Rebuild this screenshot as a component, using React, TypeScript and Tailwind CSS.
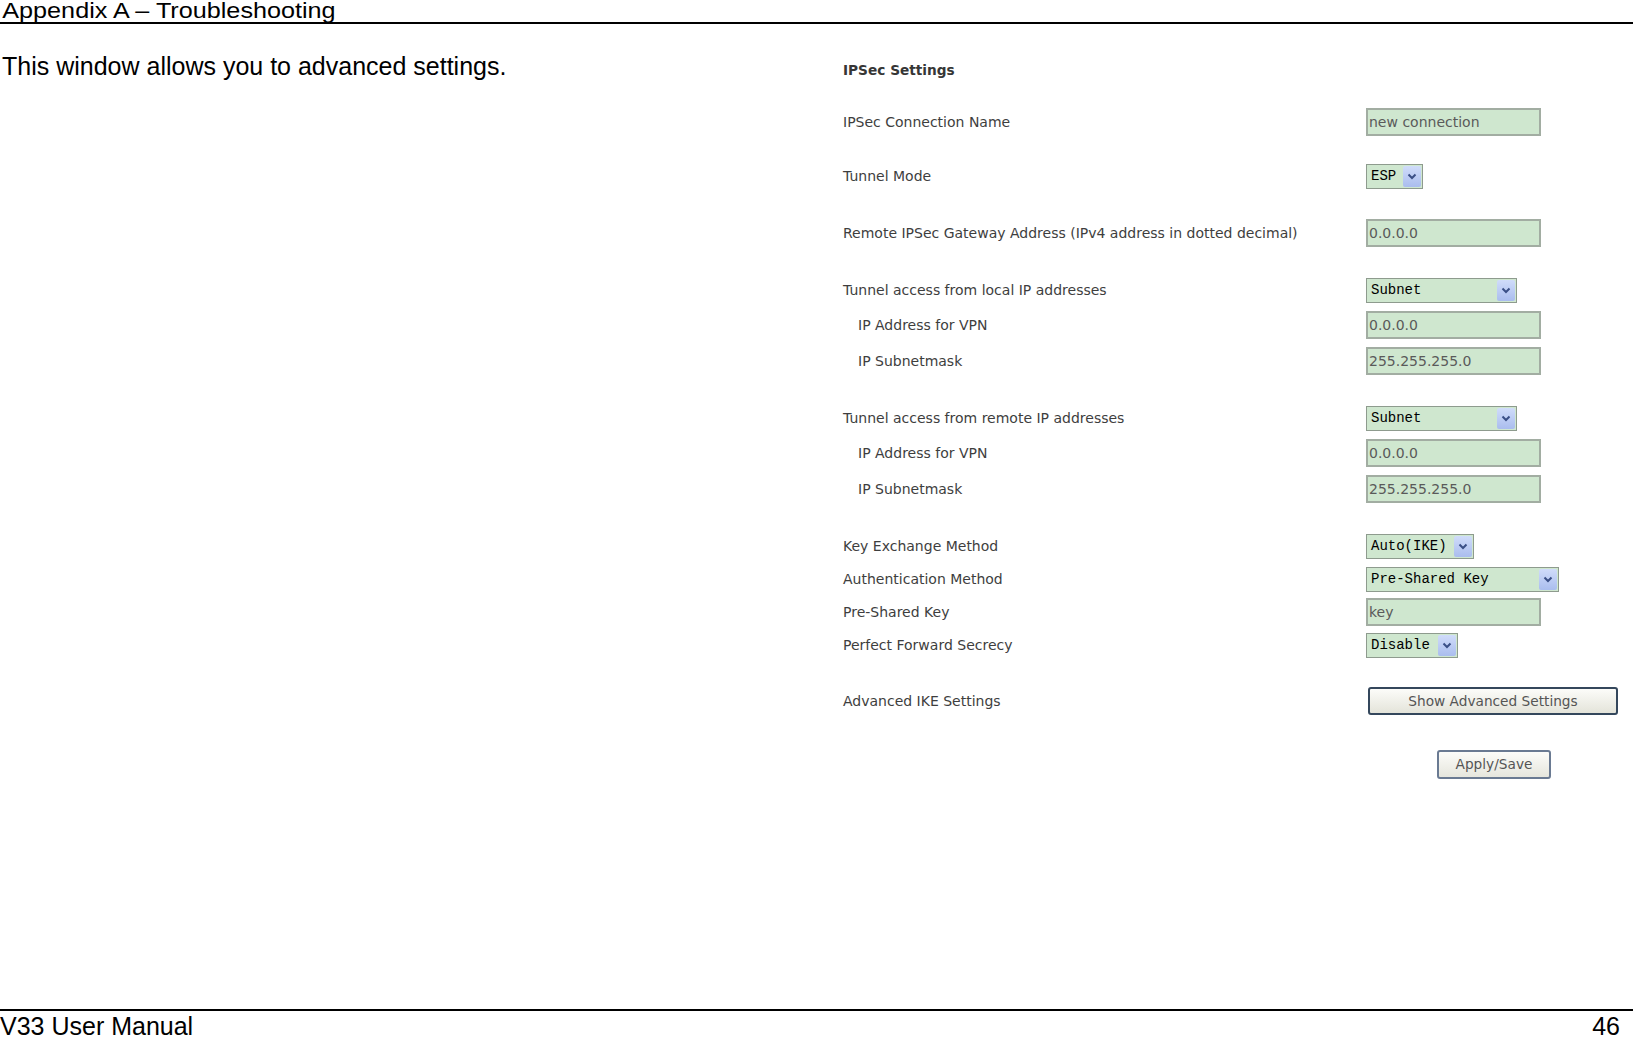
import React from "react";

const Chevron = () => (
  <svg width="10" height="7" viewBox="0 0 10 7">
    <polyline points="1.5,1.5 5,5 8.5,1.5" fill="none" stroke="#3a4f86" strokeWidth="2" />
  </svg>
);

const Input = ({ value }: { value: string }) => (
  <div className="w-[175px] h-[28px] border-2 border-[#a2ada2] bg-[#cfe7cf] text-[#5a5a5a] pl-[1px] flex items-center whitespace-nowrap">
    {value}
  </div>
);

const Select = ({ value, w }: { value: string; w: string }) => (
  <div
    className={`${w} h-[25px] border border-[#8e9b8e] bg-[#cfe7cf] flex items-center justify-between text-black text-[14px] whitespace-nowrap`}
    style={{ fontFamily: '"Liberation Mono", "DejaVu Sans Mono", monospace' }}
  >
    <span className="pl-[4px]">{value}</span>
    <span className="mr-[1px] h-[21px] w-[18px] rounded-[2px] bg-gradient-to-b from-[#d0dcfa] to-[#aabdee] flex items-center justify-center">
      <Chevron />
    </span>
  </div>
);

const Row = ({
  mt,
  label,
  indent,
  children,
}: {
  mt: string;
  label?: string;
  indent?: boolean;
  children?: React.ReactNode;
}) => (
  <div className={`${mt} flex items-center`}>
    <div className={`w-[523px] shrink-0 whitespace-nowrap ${indent ? "pl-[15px]" : ""}`}>{label}</div>
    {children}
  </div>
);

export default function App() {
  return (
    <div
      className="w-[1633px] h-[1039px] bg-white flex flex-col overflow-hidden text-black"
      style={{ fontFamily: '"Liberation Sans", Arial, sans-serif' }}
    >
      <header className="h-[24px] border-b-2 border-black shrink-0">
        <span className="inline-block origin-left scale-x-[1.145] text-[22px] leading-[22px] pl-[2px] whitespace-nowrap">
          Appendix A – Troubleshooting
        </span>
      </header>

      <main className="flex-1 flex">
        <div className="w-[836px] shrink-0 pt-[28px] pl-[2px] text-[25px] leading-[29px]">
          This window allows you to advanced settings.
        </div>

        <div
          className="flex-1 pl-[7px] pt-[36px] flex flex-col text-[14px] text-[#3e3e3e]"
          style={{ fontFamily: '"DejaVu Sans", Verdana, sans-serif' }}
        >
          <div className="h-[20px] flex items-center font-bold text-[13.7px] text-[#363636]">IPSec Settings</div>

          <Row mt="mt-[28px]" label="IPSec Connection Name">
            <Input value="new connection" />
          </Row>
          <Row mt="mt-[28px]" label="Tunnel Mode">
            <Select value="ESP" w="w-[57px]" />
          </Row>
          <Row mt="mt-[30px]" label="Remote IPSec Gateway Address (IPv4 address in dotted decimal)">
            <Input value="0.0.0.0" />
          </Row>

          <Row mt="mt-[31px]" label="Tunnel access from local IP addresses">
            <Select value="Subnet" w="w-[151px]" />
          </Row>
          <Row mt="mt-[8px]" label="IP Address for VPN" indent>
            <Input value="0.0.0.0" />
          </Row>
          <Row mt="mt-[8px]" label="IP Subnetmask" indent>
            <Input value="255.255.255.0" />
          </Row>

          <Row mt="mt-[31px]" label="Tunnel access from remote IP addresses">
            <Select value="Subnet" w="w-[151px]" />
          </Row>
          <Row mt="mt-[8px]" label="IP Address for VPN" indent>
            <Input value="0.0.0.0" />
          </Row>
          <Row mt="mt-[8px]" label="IP Subnetmask" indent>
            <Input value="255.255.255.0" />
          </Row>

          <Row mt="mt-[31px]" label="Key Exchange Method">
            <Select value="Auto(IKE)" w="w-[108px]" />
          </Row>
          <Row mt="mt-[8px]" label="Authentication Method">
            <Select value="Pre-Shared Key" w="w-[193px]" />
          </Row>
          <Row mt="mt-[6px]" label="Pre-Shared Key">
            <Input value="key" />
          </Row>
          <Row mt="mt-[7px]" label="Perfect Forward Secrecy">
            <Select value="Disable" w="w-[92px]" />
          </Row>

          <Row mt="mt-[29px]" label="Advanced IKE Settings">
            <div className="ml-[2px] w-[250px] h-[28px] border-2 border-[#34475c] rounded-[3px] bg-gradient-to-b from-[#fcfcf9] to-[#e4e4da] text-[#555] text-[13.7px] flex items-center justify-center whitespace-nowrap">
              Show Advanced Settings
            </div>
          </Row>

          <Row mt="mt-[35px]">
            <div className="ml-[71px] w-[114px] h-[29px] border-2 border-[#6a7a92] rounded-[3px] bg-gradient-to-b from-[#fcfcf9] to-[#e6e6dd] text-[#555] text-[13.7px] flex items-center justify-center whitespace-nowrap">
              Apply/Save
            </div>
          </Row>
        </div>
      </main>

      <footer className="h-[30px] shrink-0 border-t-2 border-black flex justify-between items-start pt-[3px] pr-[13px] text-[25px] leading-[25px]">
        <span>V33 User Manual</span>
        <span>46</span>
      </footer>
    </div>
  );
}
